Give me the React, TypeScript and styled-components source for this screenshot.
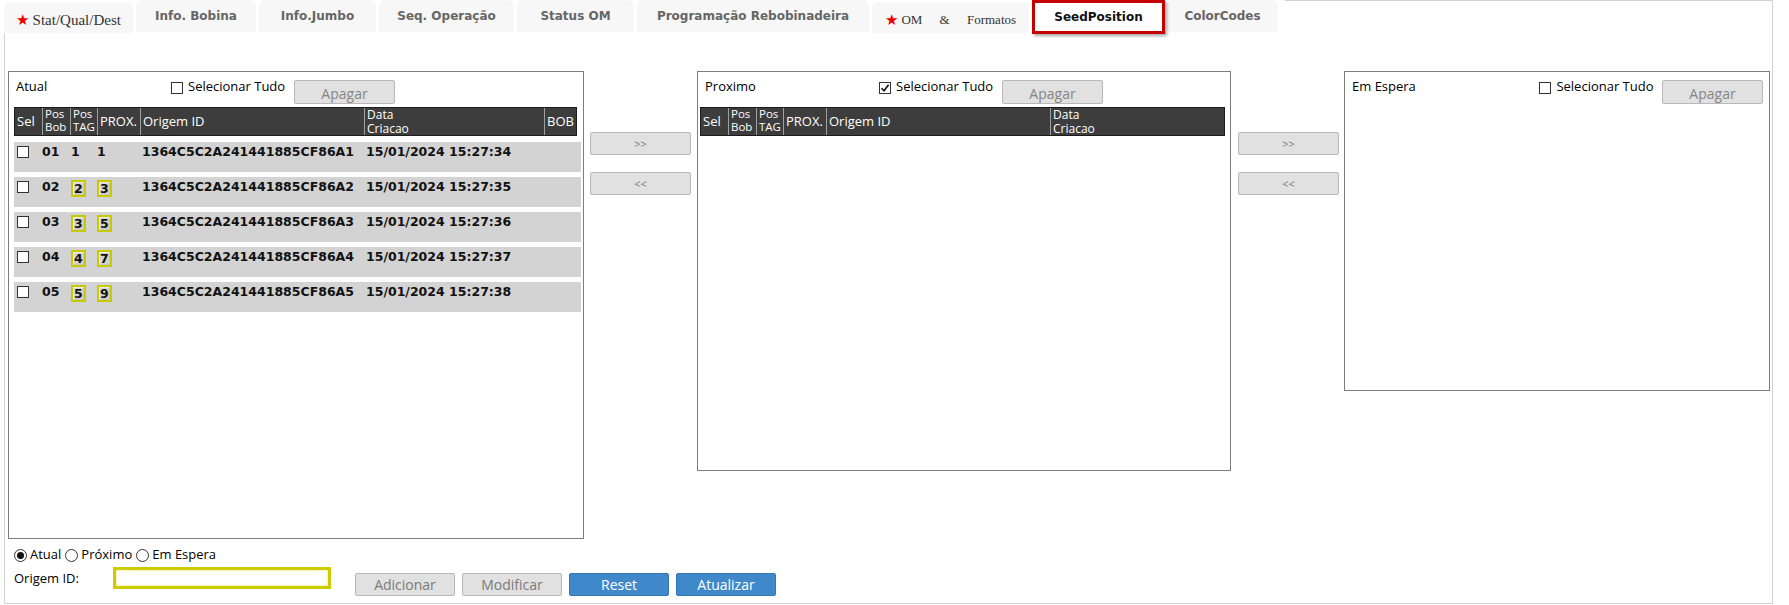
import React from "react";
import styled, { createGlobalStyle } from "styled-components";

const GlobalStyle = createGlobalStyle`
  html, body { margin: 0; padding: 0; background: #ffffff; }
  body { font-family: "Open Sans", "Noto Sans", sans-serif; font-size: 13px; color: #000; }
  * { box-sizing: border-box; }
`;

const Page = styled.div`
  padding-left: 4px;
  width: 1789px;
`;

const TabBar = styled.div`
  display: flex;
  align-items: flex-start;
  width: 1769px;
  height: 33px;
`;

const Tab = styled.div<{ $w: number; $low?: boolean }>`
  flex: none;
  width: ${(p) => p.$w}px;
  height: ${(p) => (p.$low ? 31 : 32)}px;
  margin-top: ${(p) => (p.$low ? 2 : 0)}px;
  margin-right: 3px;
  padding-top: ${(p) => (p.$low ? 5 : 0)}px;
  background: #f7f7f7;
  border-radius: 6px 6px 0 0;
  display: flex;
  align-items: center;
  justify-content: center;
  font-family: "DejaVu Sans", Verdana, sans-serif;
  font-weight: bold;
  font-size: 12px;
  color: #666666;
  white-space: nowrap;
`;

const ActiveTab = styled.div`
  flex: none;
  position: relative;
  z-index: 1;
  width: 133px;
  height: 34px;
  margin-right: 2px;
  background: #ffffff;
  border: 3px solid #c40000;
  box-shadow: 2px 2px 3px rgba(0, 0, 0, 0.35);
  display: flex;
  align-items: center;
  justify-content: center;
  font-family: "DejaVu Sans", Verdana, sans-serif;
  font-weight: bold;
  font-size: 12px;
  color: #111111;
`;

const Star = styled.span`
  font-family: "DejaVu Sans", sans-serif;
  font-size: 15px;
  line-height: 1;
  color: #ee0000;
  margin-right: 3px;
  font-weight: normal;
`;

const SerifLabel = styled.span<{ $spaced?: boolean; $fs: number }>`
  font-family: "Liberation Serif", "Times New Roman", serif;
  font-weight: normal;
  font-size: ${(p) => p.$fs}px;
  color: #333333;
  word-spacing: ${(p) => (p.$spaced ? "14px" : "0")};
`;

const TabFiller = styled.div`
  flex: 1;
  height: 33px;
  margin-left: 4px;
  border-top: 1px solid #d2d2d2;
  border-right: 1px solid #d2d2d2;
`;

const Content = styled.div`
  width: 1769px;
  height: 571px;
  border: 1px solid #d2d2d2;
  border-top: none;
  display: flex;
  flex-direction: column;
`;

const PanelsRow = styled.div`
  display: flex;
  align-items: flex-start;
  padding: 38px 0 0 3px;
`;

const Panel = styled.section<{ $w: number; $h: number; $pl: number; $pr: number }>`
  flex: none;
  width: ${(p) => p.$w}px;
  height: ${(p) => p.$h}px;
  border: 1px solid #7d7d7d;
  padding: 5px ${(p) => p.$pr}px 0 ${(p) => p.$pl}px;
  display: flex;
  flex-direction: column;
`;

const TopRow = styled.div<{ $indent: number }>`
  display: flex;
  align-items: flex-start;
  height: 26px;
  padding-left: ${(p) => p.$indent}px;
`;

const Title = styled.div<{ $w: number }>`
  width: ${(p) => p.$w}px;
  line-height: 18px;
  font-size: 13px;
  color: #000;
`;

const CheckGroup = styled.label`
  display: flex;
  align-items: flex-start;
  width: 123px;
  line-height: 18px;
  font-size: 13px;
  white-space: nowrap;
`;

const Box = styled.span<{ $mt?: number }>`
  flex: none;
  width: 12px;
  height: 12px;
  margin-top: ${(p) => p.$mt ?? 5}px;
  margin-right: 5px;
  border: 1px solid #333333;
  background: #ffffff;
  display: flex;
  align-items: center;
  justify-content: center;
`;

const GrayButton = styled.button<{ $w?: number; $h?: number; $fs?: number; $mt?: number }>`
  flex: none;
  width: ${(p) => p.$w ?? 101}px;
  height: ${(p) => p.$h ?? 23}px;
  margin-top: ${(p) => p.$mt ?? 0}px;
  padding: 0;
  background: #e1e1e1;
  border: 1px solid #b9b9b9;
  border-radius: 2px;
  color: #7a7a7a;
  font-family: "Open Sans", sans-serif;
  font-size: ${(p) => p.$fs ?? 13}px;
  line-height: 1;
`;

const ApagarButton = styled(GrayButton)`
  padding-top: 4px;
  font-size: 14px;
  color: #858585;
`;

const BlueButton = styled.button`
  flex: none;
  width: 100px;
  height: 23px;
  padding: 0;
  background: #3f89cb;
  border: 1px solid #3579b4;
  border-radius: 2px;
  color: #ffffff;
  font-family: "Open Sans", sans-serif;
  font-size: 14px;
  line-height: 1;
`;

const HeaderBar = styled.div<{ $cols: string; $trimR: number }>`
  display: grid;
  grid-template-columns: ${(p) => p.$cols};
  height: 29px;
  margin: 4px ${(p) => p.$trimR}px 0 0;
  background: #3d3d3d;
  border: 1px solid #1c1c1c;
  color: #ffffff;
`;

const HCell = styled.div<{ $two?: boolean; $small?: boolean; $first?: boolean }>`
  border-left: ${(p) => (p.$first ? "none" : "1px solid #a0a0a0")};
  padding-left: 2px;
  display: flex;
  flex-direction: column;
  justify-content: ${(p) => (p.$two ? "flex-start" : "center")};
  font-size: ${(p) => (p.$small ? 11.5 : p.$two ? 12 : 13)}px;
  line-height: ${(p) => (p.$small ? 12.5 : p.$two ? 13.5 : 13)}px;
  white-space: nowrap;
`;

const RowList = styled.div`
  display: flex;
  flex-direction: column;
  gap: 5px;
  margin-top: 6px;
`;

const DataRow = styled.div<{ $cols: string }>`
  display: grid;
  grid-template-columns: ${(p) => p.$cols};
  height: 30px;
  background: #d3d3d3;
  font-family: "DejaVu Sans", Verdana, sans-serif;
  font-weight: bold;
  font-size: 12.5px;
  color: #111111;
`;

const DCell = styled.div<{ $pl: number }>`
  padding: 1px 0 0 ${(p) => p.$pl}px;
  line-height: 18px;
  white-space: nowrap;
`;

const ValueBox = styled.span`
  display: inline-block;
  width: 15px;
  height: 17px;
  margin-top: 2px;
  border: 2px solid #c9c900;
  box-shadow: inset 1px 1px 1px rgba(255, 255, 255, 0.6), inset -1px -1px 1px rgba(0, 0, 0, 0.08);
  line-height: 13px;
  padding-left: 1px;
`;

const MoveColumn = styled.div<{ $ml: number; $mr: number }>`
  flex: none;
  display: flex;
  flex-direction: column;
  gap: 17px;
  padding-top: 61px;
  margin: 0 ${(p) => p.$mr}px 0 ${(p) => p.$ml}px;
`;

const RadioRow = styled.div`
  display: flex;
  align-items: center;
  height: 18px;
  margin-top: 6px;
  padding-left: 9px;
  font-size: 13px;
`;

const RadioItem = styled.label`
  display: flex;
  align-items: center;
  margin-right: 4px;
  line-height: 18px;
  white-space: nowrap;
`;

const RadioCircle = styled.span<{ $on?: boolean }>`
  flex: none;
  width: 13px;
  height: 13px;
  margin: 2px 3px 0 0;
  border-radius: 50%;
  border: 1px solid #333333;
  background: #ffffff;
  display: flex;
  align-items: center;
  justify-content: center;
  &::after {
    content: "";
    display: ${(p) => (p.$on ? "block" : "none")};
    width: 7px;
    height: 7px;
    border-radius: 50%;
    background: #111111;
  }
`;

const FormRow = styled.div`
  display: flex;
  align-items: flex-start;
  margin-top: 4px;
  padding-left: 9px;
`;

const FormLabel = styled.div`
  width: 99px;
  line-height: 22px;
  font-size: 13px;
`;

const YellowInput = styled.input`
  width: 218px;
  height: 22px;
  border: 3px solid #cccc00;
  box-shadow: inset 0 0 3px #e6e66a;
  background: #ffffff;
  outline: none;
`;

const ActionGroup = styled.div`
  display: flex;
  gap: 7px;
  margin: 6px 0 0 24px;
`;

const cols1 = "27px 28px 27px 43px 224px 1fr 32px";
const cols2 = "27px 28px 27px 43px 224px 1fr";

const CheckMark = () => (
  <svg width="10" height="10" viewBox="0 0 10 10">
    <path d="M1.5 5.2 L4 7.8 L8.6 1.8" fill="none" stroke="#111" strokeWidth="1.6" />
  </svg>
);

const Checkbox = ({ checked, mt }: { checked?: boolean; mt?: number }) => (
  <Box $mt={mt}>{checked ? <CheckMark /> : null}</Box>
);

const TableHeader = ({ bob, trimR }: { bob: boolean; trimR: number }) => (
  <HeaderBar $cols={bob ? cols1 : cols2} $trimR={trimR}>
    <HCell $first>Sel</HCell>
    <HCell $two $small>
      <span>Pos</span>
      <span>Bob</span>
    </HCell>
    <HCell $two $small>
      <span>Pos</span>
      <span>TAG</span>
    </HCell>
    <HCell>PROX.</HCell>
    <HCell>Origem ID</HCell>
    <HCell $two>
      <span>Data</span>
      <span>Criacao</span>
    </HCell>
    {bob ? <HCell>BOB</HCell> : null}
  </HeaderBar>
);

const rows = [
  { n: "01", tag: "1", prox: "1", id: "1364C5C2A241441885CF86A1", date: "15/01/2024 15:27:34", boxed: false },
  { n: "02", tag: "2", prox: "3", id: "1364C5C2A241441885CF86A2", date: "15/01/2024 15:27:35", boxed: true },
  { n: "03", tag: "3", prox: "5", id: "1364C5C2A241441885CF86A3", date: "15/01/2024 15:27:36", boxed: true },
  { n: "04", tag: "4", prox: "7", id: "1364C5C2A241441885CF86A4", date: "15/01/2024 15:27:37", boxed: true },
  { n: "05", tag: "5", prox: "9", id: "1364C5C2A241441885CF86A5", date: "15/01/2024 15:27:38", boxed: true },
];

const PanelTop = ({ title, titleW, indent, checked }: { title: string; titleW: number; indent: number; checked?: boolean }) => (
  <TopRow $indent={indent}>
    <Title $w={titleW}>{title}</Title>
    <CheckGroup>
      <Checkbox checked={checked} />
      Selecionar Tudo
    </CheckGroup>
    <ApagarButton $mt={3} $h={24}>Apagar</ApagarButton>
  </TopRow>
);

export default function App() {
  return (
    <>
      <GlobalStyle />
      <Page>
        <TabBar>
          <Tab $w={129} $low>
            <Star>★</Star>
            <SerifLabel $fs={15}>Stat/Qual/Dest</SerifLabel>
          </Tab>
          <Tab $w={120}>Info. Bobina</Tab>
          <Tab $w={117}>Info.Jumbo</Tab>
          <Tab $w={135}>Seq. Operação</Tab>
          <Tab $w={117}>Status OM</Tab>
          <Tab $w={232}>Programação Rebobinadeira</Tab>
          <Tab $w={157} $low>
            <Star>★</Star>
            <SerifLabel $fs={13} $spaced>OM &amp; Formatos</SerifLabel>
          </Tab>
          <ActiveTab>SeedPosition</ActiveTab>
          <Tab $w={111}>ColorCodes</Tab>
          <TabFiller />
        </TabBar>
        <Content>
          <PanelsRow>
            <Panel $w={576} $h={468} $pl={5} $pr={2}>
              <PanelTop title="Atual" titleW={155} indent={2} />
              <TableHeader bob trimR={4} />
              <RowList>
                {rows.map((r) => (
                  <DataRow key={r.n} $cols={cols1}>
                    <DCell $pl={3}>
                      <Checkbox mt={3} />
                    </DCell>
                    <DCell $pl={1}>{r.n}</DCell>
                    <DCell $pl={2}>{r.boxed ? <ValueBox>{r.tag}</ValueBox> : r.tag}</DCell>
                    <DCell $pl={1}>{r.boxed ? <ValueBox>{r.prox}</ValueBox> : r.prox}</DCell>
                    <DCell $pl={3}>{r.id}</DCell>
                    <DCell $pl={3}>{r.date}</DCell>
                    <DCell $pl={0} />
                  </DataRow>
                ))}
              </RowList>
            </Panel>
            <MoveColumn $ml={6} $mr={6}>
              <GrayButton $fs={11}>&gt;&gt;</GrayButton>
              <GrayButton $fs={11}>&lt;&lt;</GrayButton>
            </MoveColumn>
            <Panel $w={534} $h={400} $pl={2} $pr={5}>
              <PanelTop title="Proximo" titleW={174} indent={5} checked />
              <TableHeader bob={false} trimR={0} />
            </Panel>
            <MoveColumn $ml={7} $mr={5}>
              <GrayButton $fs={11}>&gt;&gt;</GrayButton>
              <GrayButton $fs={11}>&lt;&lt;</GrayButton>
            </MoveColumn>
            <Panel $w={426} $h={320} $pl={5} $pr={6}>
              <PanelTop title="Em Espera" titleW={188} indent={2} />
            </Panel>
          </PanelsRow>
          <RadioRow>
            <RadioItem>
              <RadioCircle $on />
              Atual
            </RadioItem>
            <RadioItem>
              <RadioCircle />
              Próximo
            </RadioItem>
            <RadioItem>
              <RadioCircle />
              Em Espera
            </RadioItem>
          </RadioRow>
          <FormRow>
            <FormLabel>Origem ID:</FormLabel>
            <YellowInput />
            <ActionGroup>
              <GrayButton $w={100} $fs={14}>Adicionar</GrayButton>
              <GrayButton $w={100} $fs={14}>Modificar</GrayButton>
              <BlueButton>Reset</BlueButton>
              <BlueButton>Atualizar</BlueButton>
            </ActionGroup>
          </FormRow>
        </Content>
      </Page>
    </>
  );
}
